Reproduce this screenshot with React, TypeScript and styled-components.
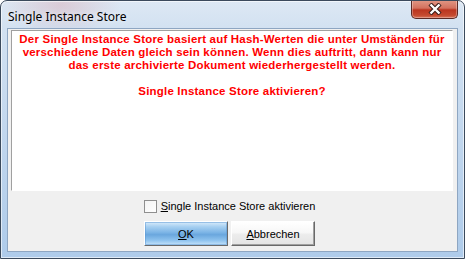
import React from 'react';
import styled, { createGlobalStyle } from 'styled-components';

const GlobalStyle = createGlobalStyle`
  html, body {
    margin: 0;
    padding: 0;
    background: #ffffff;
  }
`;

const Window = styled.div`
  width: 465px;
  height: 259px;
  box-sizing: border-box;
  display: flex;
  flex-direction: column;
  border: 1px solid #3b4a5c;
  border-radius: 7px 7px 0 0;
  background:
    radial-gradient(ellipse 60px 30px at 60px 4px, rgba(215, 150, 160, 0.35), transparent),
    linear-gradient(to bottom, #dde8f4 0px, #d2e1f1 28px, #aecbea 100%);
  box-shadow: inset 0 0 0 1px rgba(255, 255, 255, 0.6);
  overflow: hidden;
`;

const TitleBar = styled.div`
  height: 27px;
  display: flex;
  align-items: flex-start;
  padding-left: 7px;
  padding-right: 6px;
`;

const Title = styled.div`
  flex: 1;
  padding-top: 8px;
  font-family: 'Noto Sans', 'Open Sans', sans-serif;
  font-size: 12px;
  line-height: 15px;
  color: #000000;
  text-shadow: 0 0 6px rgba(255, 255, 255, 0.9);
`;

const CloseButton = styled.div`
  width: 45px;
  height: 18px;
  margin-top: -1px;
  display: flex;
  align-items: center;
  justify-content: center;
  border: 1px solid #5b2a26;
  border-top: none;
  border-radius: 0 0 5px 5px;
  background: linear-gradient(to bottom, #e29886 0%, #d4715e 45%, #bb3520 55%, #c54a30 85%, #d8735a 100%);
  box-shadow: inset 0 0 0 1px rgba(255, 255, 255, 0.3);
`;

const Client = styled.div`
  flex: 1;
  margin: 0 6px 6px 6px;
  background: #f0f0f0;
  border: 1px solid #8ea6c2;
  display: flex;
  flex-direction: column;
`;

const MessagePanel = styled.div`
  height: 157px;
  margin: 1px 4px 0 3px;
  background: #ffffff;
  border-top: 1px solid #a0a0a0;
  border-left: 1px solid #a0a0a0;
  border-right: 1px solid #ffffff;
  border-bottom: 1px solid #ffffff;
  padding: 2px 0 0 0;
  font-family: 'Liberation Sans', Arial, sans-serif;
  font-weight: bold;
  font-size: 11.5px;
  letter-spacing: 0.2px;
  line-height: 13px;
  color: #ff0000;
  text-align: center;
  white-space: nowrap;
`;

const Paragraph = styled.p`
  margin: 0 0 13px 0;
`;

const Controls = styled.div`
  display: flex;
  flex-direction: column;
  align-items: center;
  padding-top: 8px;
  gap: 8px;
  font-family: 'Liberation Sans', Arial, sans-serif;
  font-size: 11px;
  color: #000000;
`;

const CheckRow = styled.label`
  display: flex;
  align-items: center;
  gap: 4px;
  margin-left: -6px;
  height: 14px;
`;

const Box = styled.span`
  width: 11px;
  height: 11px;
  border: 1px solid #8f8f8f;
  background: linear-gradient(135deg, #f4f4f4, #ffffff);
`;

const ButtonRow = styled.div`
  display: flex;
  gap: 3px;
  margin-left: -6px;
`;

const DialogButton = styled.div<{ $primary?: boolean }>`
  width: 84px;
  height: 25px;
  box-sizing: border-box;
  display: flex;
  align-items: center;
  justify-content: center;
  border-top: 1px solid #ffffff;
  border-left: 1px solid #ffffff;
  border-right: 1px solid #696969;
  border-bottom: 1px solid #696969;
  background: ${(p) =>
    p.$primary
      ? 'linear-gradient(to bottom, #d9ecfb 0%, #a8d0f1 20%, #7db5e6 45%, #6aa7de 55%, #8fc3ee 80%, #c6e3fa 100%)'
      : 'linear-gradient(to bottom, #ffffff 0%, #f7f7f7 45%, #ececec 55%, #e4e4e4 100%)'};
  box-shadow: ${(p) => (p.$primary ? 'inset 0 0 0 1px rgba(90, 150, 210, 0.5)' : 'inset -1px -1px 0 #a0a0a0')};
`;

const Mnemonic = styled.span`
  text-decoration: underline;
`;

const CloseGlyph = () => (
  <svg width="14" height="12" viewBox="0 0 14 12">
    <path
      d="M2 1 L12 11 M12 1 L2 11"
      stroke="#3a1d1a"
      strokeWidth="4.4"
      fill="none"
    />
    <path
      d="M2.5 1.5 L11.5 10.5 M11.5 1.5 L2.5 10.5"
      stroke="#ffffff"
      strokeWidth="2.4"
      fill="none"
    />
  </svg>
);

const App: React.FC = () => {
  return (
    <>
      <GlobalStyle />
      <Window>
        <TitleBar>
          <Title>Single Instance Store</Title>
          <CloseButton>
            <CloseGlyph />
          </CloseButton>
        </TitleBar>
        <Client>
          <MessagePanel>
            <Paragraph>
              Der Single Instance Store basiert auf Hash-Werten die unter Umständen für
              <br />
              verschiedene Daten gleich sein können. Wenn dies auftritt, dann kann nur
              <br />
              das erste archivierte Dokument wiederhergestellt werden.
            </Paragraph>
            <Paragraph>Single Instance Store aktivieren?</Paragraph>
          </MessagePanel>
          <Controls>
            <CheckRow>
              <Box />
              <span>
                <Mnemonic>S</Mnemonic>ingle Instance Store aktivieren
              </span>
            </CheckRow>
            <ButtonRow>
              <DialogButton $primary>
                <Mnemonic>O</Mnemonic>K
              </DialogButton>
              <DialogButton>
                <Mnemonic>A</Mnemonic>bbrechen
              </DialogButton>
            </ButtonRow>
          </Controls>
        </Client>
      </Window>
    </>
  );
};

export default App;
